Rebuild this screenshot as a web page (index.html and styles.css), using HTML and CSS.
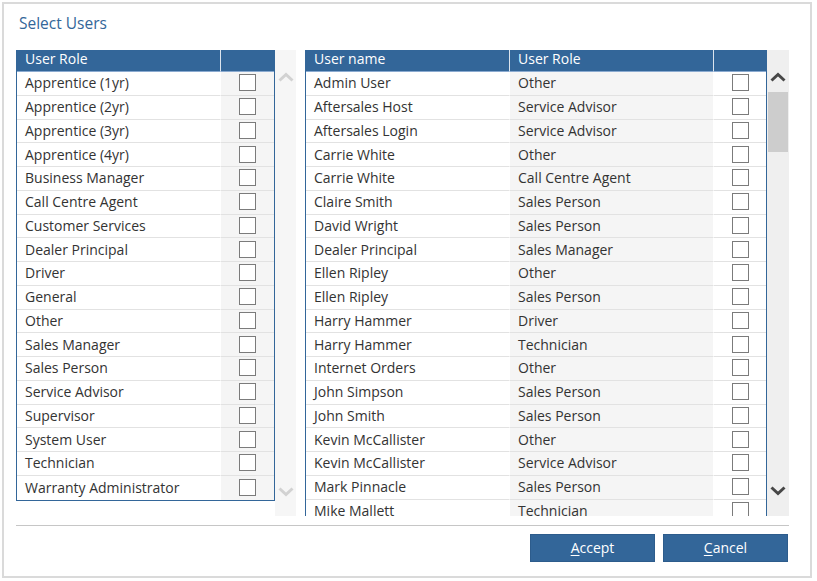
FILE: index.html
```html
<!DOCTYPE html>
<html>
<head>
<meta charset="utf-8">
<link rel="stylesheet" href="styles.css">
</head>
<body>
<div class="dialog">
  <div class="title">Select Users</div>
  <div class="content">
    <div class="main">
      <div class="grid grid-left">
        <div class="row head"><div class="cell">User Role</div><div class="cell cbcol"></div></div>
        <div class="row"><div class="cell">Apprentice (1yr)</div><div class="cell cbcol shade"><span class="cb"></span></div></div>
        <div class="row"><div class="cell">Apprentice (2yr)</div><div class="cell cbcol shade"><span class="cb"></span></div></div>
        <div class="row"><div class="cell">Apprentice (3yr)</div><div class="cell cbcol shade"><span class="cb"></span></div></div>
        <div class="row"><div class="cell">Apprentice (4yr)</div><div class="cell cbcol shade"><span class="cb"></span></div></div>
        <div class="row"><div class="cell">Business Manager</div><div class="cell cbcol shade"><span class="cb"></span></div></div>
        <div class="row"><div class="cell">Call Centre Agent</div><div class="cell cbcol shade"><span class="cb"></span></div></div>
        <div class="row"><div class="cell">Customer Services</div><div class="cell cbcol shade"><span class="cb"></span></div></div>
        <div class="row"><div class="cell">Dealer Principal</div><div class="cell cbcol shade"><span class="cb"></span></div></div>
        <div class="row"><div class="cell">Driver</div><div class="cell cbcol shade"><span class="cb"></span></div></div>
        <div class="row"><div class="cell">General</div><div class="cell cbcol shade"><span class="cb"></span></div></div>
        <div class="row"><div class="cell">Other</div><div class="cell cbcol shade"><span class="cb"></span></div></div>
        <div class="row"><div class="cell">Sales Manager</div><div class="cell cbcol shade"><span class="cb"></span></div></div>
        <div class="row"><div class="cell">Sales Person</div><div class="cell cbcol shade"><span class="cb"></span></div></div>
        <div class="row"><div class="cell">Service Advisor</div><div class="cell cbcol shade"><span class="cb"></span></div></div>
        <div class="row"><div class="cell">Supervisor</div><div class="cell cbcol shade"><span class="cb"></span></div></div>
        <div class="row"><div class="cell">System User</div><div class="cell cbcol shade"><span class="cb"></span></div></div>
        <div class="row"><div class="cell">Technician</div><div class="cell cbcol shade"><span class="cb"></span></div></div>
        <div class="row last"><div class="cell">Warranty Administrator</div><div class="cell cbcol shade"><span class="cb"></span></div></div>
      </div>
      <div class="strip">
        <svg class="chev" width="16" height="10" viewBox="0 0 16 10"><polyline points="1.5,8.5 8,2.5 14.5,8.5" fill="none" stroke="#d2d2d2" stroke-width="3"/></svg>
        <svg class="chev" width="16" height="10" viewBox="0 0 16 10"><polyline points="1.5,1.5 8,7.5 14.5,1.5" fill="none" stroke="#d2d2d2" stroke-width="3"/></svg>
      </div>
      <div class="grid grid-right">
        <div class="row head"><div class="cell">User name</div><div class="cell">User Role</div><div class="cell cbcol"></div></div>
        <div class="row"><div class="cell">Admin User</div><div class="cell shade">Other</div><div class="cell cbcol"><span class="cb"></span></div></div>
        <div class="row"><div class="cell">Aftersales Host</div><div class="cell shade">Service Advisor</div><div class="cell cbcol"><span class="cb"></span></div></div>
        <div class="row"><div class="cell">Aftersales Login</div><div class="cell shade">Service Advisor</div><div class="cell cbcol"><span class="cb"></span></div></div>
        <div class="row"><div class="cell">Carrie White</div><div class="cell shade">Other</div><div class="cell cbcol"><span class="cb"></span></div></div>
        <div class="row"><div class="cell">Carrie White</div><div class="cell shade">Call Centre Agent</div><div class="cell cbcol"><span class="cb"></span></div></div>
        <div class="row"><div class="cell">Claire Smith</div><div class="cell shade">Sales Person</div><div class="cell cbcol"><span class="cb"></span></div></div>
        <div class="row"><div class="cell">David Wright</div><div class="cell shade">Sales Person</div><div class="cell cbcol"><span class="cb"></span></div></div>
        <div class="row"><div class="cell">Dealer Principal</div><div class="cell shade">Sales Manager</div><div class="cell cbcol"><span class="cb"></span></div></div>
        <div class="row"><div class="cell">Ellen Ripley</div><div class="cell shade">Other</div><div class="cell cbcol"><span class="cb"></span></div></div>
        <div class="row"><div class="cell">Ellen Ripley</div><div class="cell shade">Sales Person</div><div class="cell cbcol"><span class="cb"></span></div></div>
        <div class="row"><div class="cell">Harry Hammer</div><div class="cell shade">Driver</div><div class="cell cbcol"><span class="cb"></span></div></div>
        <div class="row"><div class="cell">Harry Hammer</div><div class="cell shade">Technician</div><div class="cell cbcol"><span class="cb"></span></div></div>
        <div class="row"><div class="cell">Internet Orders</div><div class="cell shade">Other</div><div class="cell cbcol"><span class="cb"></span></div></div>
        <div class="row"><div class="cell">John Simpson</div><div class="cell shade">Sales Person</div><div class="cell cbcol"><span class="cb"></span></div></div>
        <div class="row"><div class="cell">John Smith</div><div class="cell shade">Sales Person</div><div class="cell cbcol"><span class="cb"></span></div></div>
        <div class="row"><div class="cell">Kevin McCallister</div><div class="cell shade">Other</div><div class="cell cbcol"><span class="cb"></span></div></div>
        <div class="row"><div class="cell">Kevin McCallister</div><div class="cell shade">Service Advisor</div><div class="cell cbcol"><span class="cb"></span></div></div>
        <div class="row"><div class="cell">Mark Pinnacle</div><div class="cell shade">Sales Person</div><div class="cell cbcol"><span class="cb"></span></div></div>
        <div class="row"><div class="cell">Mike Mallett</div><div class="cell shade">Technician</div><div class="cell cbcol"><span class="cb"></span></div></div>
      </div>
      <div class="scrollbar">
        <svg class="arrow" width="16" height="10" viewBox="0 0 16 10"><polyline points="1.5,8.5 8,2.5 14.5,8.5" fill="none" stroke="#474747" stroke-width="3"/></svg>
        <div class="thumb"></div>
        <div class="spacer"></div>
        <svg class="arrow" width="16" height="10" viewBox="0 0 16 10"><polyline points="1.5,1.5 8,7.5 14.5,1.5" fill="none" stroke="#474747" stroke-width="3"/></svg>
      </div>
    </div>
    <div class="sep"></div>
    <div class="buttons">
      <button class="btn"><u>A</u>ccept</button>
      <button class="btn"><u>C</u>ancel</button>
    </div>
  </div>
</div>
</body>
</html>
```
FILE: styles.css
```css
* { box-sizing: border-box; }
html, body { margin: 0; padding: 0; background: #fff; }
body { font-family: "Open Sans", "Noto Sans", sans-serif; color: #333; font-size: 14px; }

.dialog {
  width: 810px;
  height: 576px;
  margin: 2px;
  border: 2px solid #dadada;
  display: flex;
  flex-direction: column;
}
.title {
  height: 46px;
  padding: 8px 0 0 15px;
  font-size: 15.5px;
  line-height: 22px;
  color: #336699;
}
.content {
  padding: 0 21px 0 12px;
  display: flex;
  flex-direction: column;
}
.main {
  display: flex;
  height: 466px;
}
.grid {
  overflow: hidden;
  border-left: 1px solid #336699;
  border-right: 1px solid #336699;
}
.grid-left {
  width: 259px;
  align-self: flex-start;
  border-bottom: 1px solid #336699;
}
.grid-right {
  width: 462px;
  margin-left: 9px;
  height: 466px;
}
.row {
  display: grid;
  height: 23.75px;
}
.grid-left .row { grid-template-columns: 204px 53px; }
.grid-right .row { grid-template-columns: 204px 204px 52px; }
.cell {
  display: flex;
  align-items: center;
  padding-left: 8px;
  padding-bottom: 1px;
  border-bottom: 1px solid #e2e2e2;
  border-right: 1px solid #fff;
  white-space: nowrap;
  overflow: hidden;
}
.cell:last-child { border-right: none; }
.row.last .cell { border-bottom: none; }
.row.head { height: 22px; }
.row.head .cell {
  background: #336699;
  color: #fff;
  padding-bottom: 4px;
  border-bottom: 1px solid #8aaad0;
  border-right: 1px solid #dbe4ee;
}
.row.head .cell:last-child { border-right: none; }
.shade { background: #f5f5f5; }
.cbcol { justify-content: center; padding-left: 0; padding-bottom: 0; }
.cb {
  width: 17px;
  height: 17px;
  border: 1px solid #7b7b7b;
  background: #fff;
  margin-top: -1px;
}
.strip {
  width: 21px;
  background: #f6f6f6;
  display: flex;
  flex-direction: column;
  justify-content: space-between;
  align-items: center;
  padding: 22px 0 19px 0;
}
.scrollbar {
  width: 22px;
  background: #efefef;
  display: flex;
  flex-direction: column;
  align-items: center;
  padding: 22px 0 20px 0;
}
.thumb {
  width: 20px;
  height: 60px;
  margin-top: 10px;
  background: #cdcdcd;
}
.spacer { flex: 1; }
.sep {
  height: 1px;
  background: #c6c6c6;
  margin-top: 9px;
}
.buttons {
  display: flex;
  justify-content: flex-end;
  gap: 8px;
  margin-top: 8px;
  padding-right: 1px;
}
.btn {
  width: 125px;
  height: 28px;
  background: #336699;
  color: #fff;
  border: 1px solid #2d5c8c;
  font-family: "Open Sans", "Noto Sans", sans-serif;
  font-size: 14px;
  padding: 0 0 2px 0;
}
.btn u { text-underline-offset: 2px; }
```
